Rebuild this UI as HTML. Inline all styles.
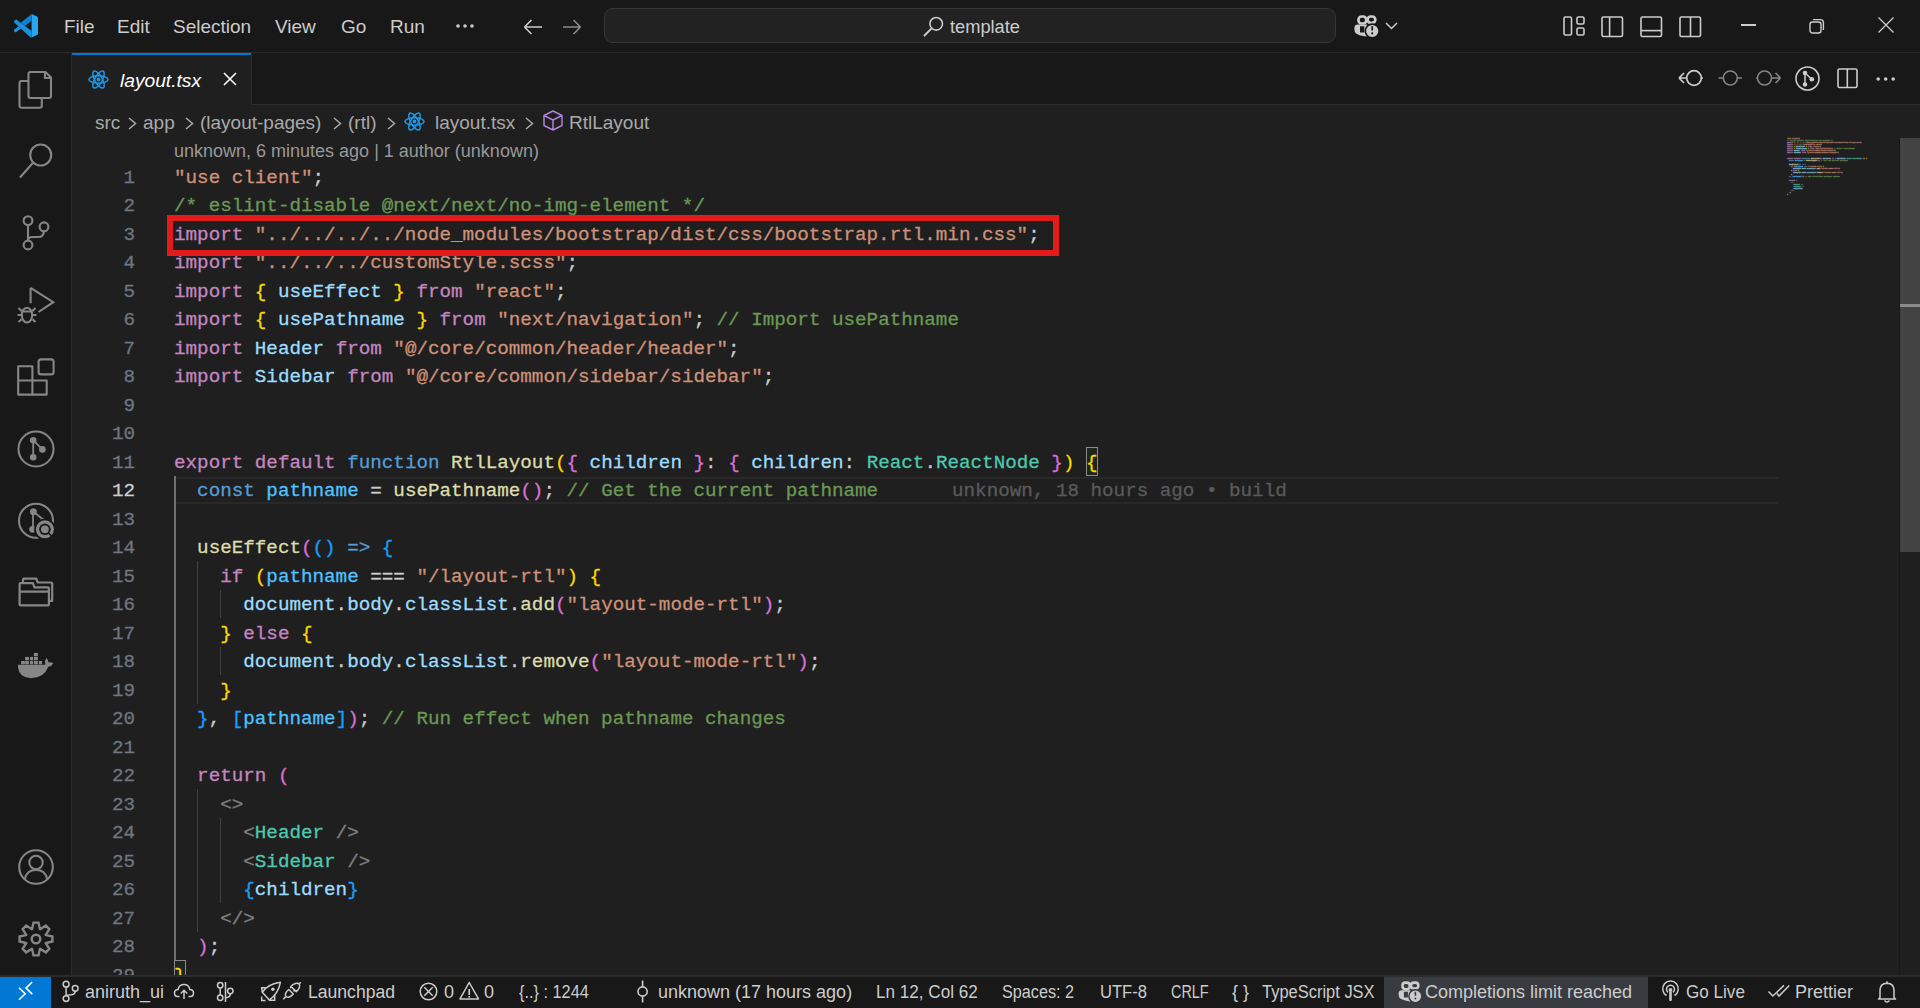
<!DOCTYPE html>
<html><head><meta charset="utf-8"><style>
*{margin:0;padding:0;box-sizing:border-box}
html,body{width:1920px;height:1008px;overflow:hidden;background:#1f1f1f;font-family:"Liberation Sans",sans-serif;color:#cccccc;position:relative}
.abs{position:absolute}
.tx{position:absolute;white-space:nowrap;line-height:24px}
svg{position:absolute;overflow:visible}
.ln{position:absolute;width:135px;text-align:right;color:#6e7681;font-family:"Liberation Mono",monospace;font-size:19.245px;line-height:28.5px;left:0;height:28.5px;padding-top:1.7px;-webkit-text-stroke:0.3px}
.cl{position:absolute;left:174px;white-space:pre;color:#cccccc;font-family:"Liberation Mono",monospace;font-size:19.245px;line-height:28.5px;height:28.5px;padding-top:1.7px;-webkit-text-stroke:0.3px}
.k{color:#c586c0}.s{color:#ce9178}.c{color:#6a9955}.v{color:#9cdcfe}.f{color:#dcdcaa}.b{color:#569cd6}.t{color:#4ec9b0}
.cn{color:#4fc1ff}.g{color:#808080}.p{color:#cccccc}
.y{color:#ffd700}.o{color:#da70d6}.u{color:#179fff}
.bm{outline:1px solid #888888;outline-offset:-1px;background:rgba(0,100,0,0.1)}
.bl{color:#5a5a5a}
</style></head><body>
<div class="abs" style="left:0;top:0;width:1920px;height:53px;background:#181818;border-bottom:1px solid #2b2b2b"></div>
<svg style="left:0px;top:0px" width="42" height="42" viewBox="0 0 42 42"><path d="M31.6 14 L37 16.5 Q38 17.1 38 18.2 V33.4 Q38 34.5 37 35 L31.6 37.6 Z" fill="#29a6f0"/><path d="M31.6 14 L31.6 20.8 L24.9 25.9 L20.8 22.7 Z" fill="#0d82d2"/><path d="M16.3 19.6 L31.6 31 L31.6 37.6 L30.3 37.3 L14.3 22.6 Q13.6 21.6 14.4 20.6 Z" fill="#1592e0"/><path d="M14.2 29.6 L20.3 25.2 L22.6 27.1 L16.3 31.9 Q15 32.5 14.2 31.6 Q13.6 30.5 14.2 29.6 Z" fill="#1592e0"/></svg>
<div class="tx" style="left:64px;top:14.5px;font-size:19px;color:#cccccc;">File</div>
<div class="tx" style="left:117px;top:14.5px;font-size:19px;color:#cccccc;">Edit</div>
<div class="tx" style="left:173px;top:14.5px;font-size:19px;color:#cccccc;">Selection</div>
<div class="tx" style="left:275px;top:14.5px;font-size:19px;color:#cccccc;">View</div>
<div class="tx" style="left:341px;top:14.5px;font-size:19px;color:#cccccc;">Go</div>
<div class="tx" style="left:390px;top:14.5px;font-size:19px;color:#cccccc;">Run</div>
<svg style="left:455px;top:23px" width="22" height="6" viewBox="0 0 22 6"><circle cx="3" cy="3" r="1.8" fill="#cccccc"/><circle cx="10" cy="3" r="1.8" fill="#cccccc"/><circle cx="17" cy="3" r="1.8" fill="#cccccc"/></svg>
<svg style="left:523px;top:17.5px" width="20" height="18" viewBox="0 0 20 18"><path d="M1.5 9 H19 M1.5 9 L8.5 2 M1.5 9 L8.5 16" stroke="#cccccc" stroke-width="1.6" fill="none"/></svg>
<svg style="left:562px;top:17.5px" width="20" height="18" viewBox="0 0 20 18"><path d="M1 9 H18.5 M18.5 9 L11.5 2 M18.5 9 L11.5 16" stroke="#8b8b8b" stroke-width="1.6" fill="none"/></svg>
<div class="abs" style="left:604px;top:8px;width:732px;height:35px;background:#222222;border:1px solid #363636;border-radius:9px"></div>
<svg style="left:923px;top:15px" width="22" height="22" viewBox="0 0 22 22"><circle cx="13.2" cy="8.8" r="6.3" stroke="#cccccc" stroke-width="1.6" fill="none"/><path d="M8.6 13.4 L1.5 20.5" stroke="#cccccc" stroke-width="1.9" stroke-linecap="round"/></svg>
<div class="tx" style="left:950px;top:14.5px;font-size:19px;color:#cccccc;transform:scaleX(0.96);transform-origin:0 0;">template</div>
<svg style="left:1350px;top:10px" width="35" height="32" viewBox="0 0 35 32"><rect x="8.5" y="6.5" width="7.7" height="7" rx="3" stroke="#cccccc" stroke-width="2.7" fill="none"/><rect x="17.6" y="6.5" width="7.7" height="6.3" rx="3" stroke="#cccccc" stroke-width="2.7" fill="none"/><path fill-rule="evenodd" d="M8 14.6 H17 V26.5 L14.6 26.3 Q9 25.5 6 23.5 Q4.4 22 4.4 19 V18 Q4.4 14.6 8 14.6 Z M10 16.2 H14.3 V22.4 H10 Z" fill="#cccccc"/><circle cx="22.2" cy="21" r="6.9" fill="#cccccc" stroke="#181818" stroke-width="1.6"/><path d="M22.2 16.2 V20.5" stroke="#181818" stroke-width="1.7"/><circle cx="22.2" cy="23.4" r="1.05" fill="#181818"/></svg>
<svg style="left:1385px;top:22px" width="13" height="8" viewBox="0 0 13 8"><path d="M1 1 L6.5 6.5 L12 1" stroke="#cccccc" stroke-width="1.5" fill="none"/></svg>
<svg style="left:1563px;top:16px" width="22" height="20" viewBox="0 0 22 20"><rect x="1" y="1" width="7.5" height="18" rx="1.5" stroke="#cccccc" stroke-width="1.6" fill="none"/><rect x="14" y="1" width="7" height="7" rx="1.5" stroke="#cccccc" stroke-width="1.6" fill="none"/><rect x="14" y="12" width="7" height="7" rx="1.5" stroke="#cccccc" stroke-width="1.6" fill="none"/></svg>
<svg style="left:1601px;top:16px" width="22" height="21" viewBox="0 0 22 21"><rect x="1" y="1" width="20.5" height="19.5" rx="1.5" stroke="#cccccc" stroke-width="1.6" fill="none"/><path d="M8.6 1 V20.5" stroke="#cccccc" stroke-width="1.6" fill="none"/></svg>
<svg style="left:1640px;top:16px" width="22" height="21" viewBox="0 0 22 21"><rect x="1" y="1" width="20.5" height="19.5" rx="1.5" stroke="#cccccc" stroke-width="1.6" fill="none"/><path d="M1 14.6 H21.5" stroke="#cccccc" stroke-width="1.6" fill="none"/></svg>
<svg style="left:1679px;top:16px" width="22" height="21" viewBox="0 0 22 21"><rect x="1" y="1" width="20.5" height="19.5" rx="1.5" stroke="#cccccc" stroke-width="1.6" fill="none"/><path d="M11.5 1 V20.5" stroke="#cccccc" stroke-width="1.6" fill="none"/></svg>
<div class="abs" style="left:1741px;top:24px;width:15px;height:2px;background:#cccccc"></div>
<svg style="left:1809px;top:18px" width="16" height="16" viewBox="0 0 16 16"><rect x="1" y="4" width="11" height="11" rx="2.5" stroke="#cccccc" stroke-width="1.4" fill="none"/><path d="M4 1.6 H11.5 Q14.4 1.6 14.4 4.5 V12" stroke="#cccccc" stroke-width="1.4" fill="none"/></svg>
<svg style="left:1878px;top:17px" width="16" height="16" viewBox="0 0 16 16"><path d="M0.5 0.5 L15.5 15.5 M15.5 0.5 L0.5 15.5" stroke="#cccccc" stroke-width="1.3"/></svg>
<div class="abs" style="left:0;top:53px;width:72px;height:923px;background:#181818;border-right:1px solid #2b2b2b"></div>
<svg style="left:18px;top:71px" width="36" height="38" viewBox="0 0 36 38"><path d="M10.5 10 H3.5 Q1.5 10 1.5 12 V34.8 Q1.5 36.8 3.5 36.8 H21.8 Q23.8 36.8 23.8 34.8 V27" stroke="#868686" stroke-width="2.1" fill="none"/><path d="M10.5 3 Q10.5 1 12.5 1 H27.5 L33 6.5 V25 Q33 27 31 27 H12.5 Q10.5 27 10.5 25 Z" stroke="#868686" stroke-width="2.1" fill="none"/><path d="M27 1.5 V7 H32.5" stroke="#868686" stroke-width="2.1" fill="none"/></svg>
<svg style="left:18px;top:142px" width="36" height="38" viewBox="0 0 36 38"><circle cx="22.7" cy="13" r="10.5" stroke="#868686" stroke-width="2.1" fill="none"/><path d="M15 20.8 L2 35.5" stroke="#868686" stroke-width="2.1"/></svg>
<svg style="left:18px;top:214px" width="36" height="38" viewBox="0 0 36 38"><circle cx="10" cy="6.6" r="4.4" stroke="#868686" stroke-width="2.1" fill="none"/><circle cx="10" cy="31" r="4.4" stroke="#868686" stroke-width="2.1" fill="none"/><circle cx="26" cy="12.8" r="4.4" stroke="#868686" stroke-width="2.1" fill="none"/><path d="M10 11 V26.6" stroke="#868686" stroke-width="2.1" fill="none"/><path d="M26 17.2 Q26 20 24 22 Q23 23 20.5 23 H14 Q10.5 23 10 26" stroke="#868686" stroke-width="2.1" fill="none"/></svg>
<svg style="left:16px;top:287px" width="40" height="40" viewBox="0 0 40 40"><path d="M14.6 0.8 V16.2 M14.6 0.8 L37.3 15.2 L22.6 25" stroke="#868686" stroke-width="2.1" fill="none" stroke-linejoin="miter"/><ellipse cx="11" cy="28.1" rx="5.2" ry="7.4" stroke="#868686" stroke-width="2.1" fill="none"/><path d="M5.8 24.5 H16.2 M2.5 21.1 L5.6 24 M19.5 21.1 L16.4 24 M1.5 28 H5.5 M16.5 28 H20.5 M2.5 35 L5.6 32.2 M19.5 35 L16.4 32.2" stroke="#868686" stroke-width="2.1" fill="none"/></svg>
<svg style="left:17px;top:358px" width="40" height="40" viewBox="0 0 40 40"><path d="M1.2 8.3 H15.4 V22.5 H29.7 V36.6 H1.2 Z" stroke="#868686" stroke-width="2.1" fill="none" stroke-linejoin="round"/><path d="M1.2 22.5 H15.4 V36.6" stroke="#868686" stroke-width="2.1" fill="none"/><rect x="21.6" y="1.4" width="15" height="15" rx="2.5" stroke="#868686" stroke-width="2.1" fill="none"/></svg>
<svg style="left:17px;top:430px" width="38" height="38" viewBox="0 0 38 38"><circle cx="19" cy="19" r="17.5" stroke="#868686" stroke-width="2.1" fill="none"/><circle cx="16.2" cy="10.2" r="3.3" fill="#868686"/><circle cx="16.2" cy="27.3" r="3.3" fill="#868686"/><circle cx="25.4" cy="19.4" r="3.3" fill="#868686"/><path d="M16.2 10.2 V27.3 M16.2 10.2 L25.4 19.4" stroke="#868686" stroke-width="1.8"/></svg>
<svg style="left:17px;top:502px" width="40" height="40" viewBox="0 0 40 40"><circle cx="19" cy="18.8" r="17" stroke="#868686" stroke-width="2.1" fill="none"/><circle cx="16.4" cy="9.7" r="3.4" fill="#868686"/><circle cx="15.6" cy="27.3" r="3.4" fill="#868686"/><path d="M16 9.7 V27.3 M16.4 9.7 L25.5 17 M23.5 17.5 L27 16.5" stroke="#868686" stroke-width="1.8"/><circle cx="27.9" cy="27.3" r="10.8" fill="#181818"/><circle cx="27.9" cy="27.3" r="9" fill="#868686"/><circle cx="27.9" cy="27.3" r="5.8" fill="#181818"/><circle cx="27.9" cy="27.3" r="3.9" fill="#868686"/><path d="M31.5 31 L34.5 34" stroke="#181818" stroke-width="1.6"/></svg>
<svg style="left:17px;top:576px" width="40" height="34" viewBox="0 0 40 34"><path d="M3.6 7.2 H15.95 L17.4 11.3 H30.9 Q31.9 11.3 31.9 12.3 V28.4 Q31.9 29.4 30.9 29.4 H3.6 Q2.6 29.4 2.6 28.4 V8.2 Q2.6 7.2 3.6 7.2 Z M2.6 15.6 H31.9" stroke="#868686" stroke-width="2.2" fill="none" stroke-linejoin="round"/><path d="M6 6.8 V3.7 Q6 2.7 7 2.7 H19.3 L20.7 6.5 H34.2 Q35.2 6.5 35.2 7.5 V24.9 H32.4" stroke="#868686" stroke-width="2.2" fill="none" stroke-linejoin="round"/></svg>
<svg style="left:17px;top:650px" width="40" height="32" viewBox="0 0 40 32"><path d="M1 14.8 H28.2 Q27 11.5 29.3 8.1 Q31.2 10 31.6 12.4 Q34.2 11.8 36.2 13.3 Q35 16.2 31.3 16.8 Q27 28.2 14 28.2 Q2.5 28 1 17.5 Z" fill="#868686"/><rect x="4.05" y="10.95" width="3.8" height="3.35" fill="#868686"/><rect x="8.1" y="10.95" width="3.8" height="3.35" fill="#868686"/><rect x="12.9" y="10.95" width="3.2" height="3.35" fill="#868686"/><rect x="16.9" y="10.95" width="4" height="3.35" fill="#868686"/><rect x="21.8" y="10.95" width="3.3" height="3.35" fill="#868686"/><rect x="8.1" y="6.9" width="3.8" height="3.35" fill="#868686"/><rect x="12.9" y="6.9" width="3.2" height="3.35" fill="#868686"/><rect x="16.9" y="6.9" width="4" height="3.35" fill="#868686"/><rect x="16.9" y="2.9" width="4" height="3.35" fill="#868686"/></svg>
<svg style="left:18px;top:849px" width="36" height="36" viewBox="0 0 36 36"><circle cx="18" cy="18" r="16.8" stroke="#868686" stroke-width="2.1" fill="none"/><circle cx="18" cy="13.5" r="6.7" stroke="#868686" stroke-width="2.1" fill="none"/><path d="M7 30 Q8.5 21 18 21 Q27.5 21 29 30" stroke="#868686" stroke-width="2.1" fill="none"/></svg>
<svg style="left:17.8px;top:920.8px" width="36" height="36" viewBox="0 0 36 36"><path d="M14.02 8.18 L15.52 1.59 L20.48 1.59 L21.98 8.18 L22.13 8.24 L27.85 4.64 L31.36 8.15 L27.76 13.87 L27.82 14.02 L34.41 15.52 L34.41 20.48 L27.82 21.98 L27.76 22.13 L31.36 27.85 L27.85 31.36 L22.13 27.76 L21.98 27.82 L20.48 34.41 L15.52 34.41 L14.02 27.82 L13.87 27.76 L8.15 31.36 L4.64 27.85 L8.24 22.13 L8.18 21.98 L1.59 20.48 L1.59 15.52 L8.18 14.02 L8.24 13.87 L4.64 8.15 L8.15 4.64 L13.87 8.24 Z" stroke="#868686" stroke-width="2.4" fill="none" stroke-linejoin="miter"/><circle cx="18" cy="18" r="4.3" stroke="#868686" stroke-width="2.4" fill="none"/></svg>
<div class="abs" style="left:72px;top:53px;width:1848px;height:52px;background:#181818;border-bottom:1px solid #2b2b2b"></div>
<div class="abs" style="left:72px;top:53px;width:180px;height:52px;background:#1f1f1f;border-right:1px solid #2b2b2b"></div>
<div class="abs" style="left:72px;top:53px;width:179px;height:2px;background:#0078d4"></div>
<svg style="left:88px;top:69px" width="21" height="21" viewBox="0 0 22 22"><g transform="translate(11 11)" stroke="#1d97e6" stroke-width="1.6" fill="none"><ellipse rx="10" ry="3.9"/><ellipse rx="10" ry="3.9" transform="rotate(60)"/><ellipse rx="10" ry="3.9" transform="rotate(120)"/></g><circle cx="11" cy="11" r="2" fill="#1d97e6"/></svg>
<div class="tx" style="left:120px;top:67.5px;font-size:19.2px;color:#ffffff;font-style:italic;line-height:26px">layout.tsx</div>
<svg style="left:223px;top:72px" width="14" height="14" viewBox="0 0 14 14"><path d="M1 1 L13 13 M13 1 L1 13" stroke="#ffffff" stroke-width="1.6"/></svg>
<svg style="left:1678px;top:68px" width="26" height="20" viewBox="0 0 26 20"><circle cx="16" cy="10" r="7.3" stroke="#cccccc" stroke-width="1.7" fill="none"/><path d="M1 10 H8.7 M1 10 L6 5 M1 10 L6 15 M23.3 10 H25" stroke="#cccccc" stroke-width="1.7" fill="none"/></svg>
<svg style="left:1718px;top:68px" width="26" height="20" viewBox="0 0 26 20"><circle cx="12.3" cy="10" r="7" stroke="#858585" stroke-width="1.6" fill="none"/><path d="M0.5 10 H5.3 M19.3 10 H24" stroke="#858585" stroke-width="1.6" fill="none"/></svg>
<svg style="left:1756px;top:68px" width="26" height="20" viewBox="0 0 26 20"><circle cx="8.5" cy="10" r="7" stroke="#858585" stroke-width="1.6" fill="none"/><path d="M0 10 H1.5 M15.5 10 H24.5 M24.5 10 L19.5 5 M24.5 10 L19.5 15" stroke="#858585" stroke-width="1.6" fill="none"/></svg>
<svg style="left:1795px;top:66px" width="26" height="26" viewBox="0 0 26 26"><circle cx="12.5" cy="12.5" r="11.5" stroke="#cccccc" stroke-width="1.6" fill="none"/><circle cx="10" cy="7" r="2.3" fill="#cccccc"/><circle cx="10" cy="18.5" r="2.3" fill="#cccccc"/><circle cx="16.8" cy="13.2" r="2.3" fill="#cccccc"/><path d="M10 7 V18.5 M10 7 L16.8 13.2" stroke="#cccccc" stroke-width="1.5"/></svg>
<svg style="left:1837px;top:68px" width="21" height="21" viewBox="0 0 21 21"><rect x="1" y="1" width="19" height="18.5" rx="1.5" stroke="#cccccc" stroke-width="1.6" fill="none"/><path d="M10.3 1 V19.5" stroke="#cccccc" stroke-width="1.6"/></svg>
<svg style="left:1876px;top:76px" width="20" height="6" viewBox="0 0 20 6"><circle cx="2.2" cy="3" r="1.8" fill="#cccccc"/><circle cx="9.7" cy="3" r="1.8" fill="#cccccc"/><circle cx="17.2" cy="3" r="1.8" fill="#cccccc"/></svg>
<div class="tx" style="left:95px;top:110.5px;font-size:19px;color:#a9a9a9;">src</div>
<svg style="left:128px;top:117px" width="9" height="13" viewBox="0 0 9 13"><path d="M1 1 L7.5 6.5 L1 12" stroke="#a9a9a9" stroke-width="1.5" fill="none"/></svg>
<div class="tx" style="left:143px;top:110.5px;font-size:19px;color:#a9a9a9;">app</div>
<svg style="left:185px;top:117px" width="9" height="13" viewBox="0 0 9 13"><path d="M1 1 L7.5 6.5 L1 12" stroke="#a9a9a9" stroke-width="1.5" fill="none"/></svg>
<div class="tx" style="left:200px;top:110.5px;font-size:19px;color:#a9a9a9;">(layout-pages)</div>
<svg style="left:333px;top:117px" width="9" height="13" viewBox="0 0 9 13"><path d="M1 1 L7.5 6.5 L1 12" stroke="#a9a9a9" stroke-width="1.5" fill="none"/></svg>
<div class="tx" style="left:348px;top:110.5px;font-size:19px;color:#a9a9a9;">(rtl)</div>
<svg style="left:387px;top:117px" width="9" height="13" viewBox="0 0 9 13"><path d="M1 1 L7.5 6.5 L1 12" stroke="#a9a9a9" stroke-width="1.5" fill="none"/></svg>
<svg style="left:404px;top:111px" width="21" height="21" viewBox="0 0 22 22"><g transform="translate(11 11)" stroke="#1d97e6" stroke-width="1.6" fill="none"><ellipse rx="10" ry="3.9"/><ellipse rx="10" ry="3.9" transform="rotate(60)"/><ellipse rx="10" ry="3.9" transform="rotate(120)"/></g><circle cx="11" cy="11" r="2" fill="#1d97e6"/></svg>
<div class="tx" style="left:435px;top:110.5px;font-size:19px;color:#a9a9a9;">layout.tsx</div>
<svg style="left:525px;top:117px" width="9" height="13" viewBox="0 0 9 13"><path d="M1 1 L7.5 6.5 L1 12" stroke="#a9a9a9" stroke-width="1.5" fill="none"/></svg>
<svg style="left:543px;top:110px" width="20" height="21" viewBox="0 0 20 21"><path d="M10 1 L19 5.5 V15.5 L10 20 L1 15.5 V5.5 Z M1 5.5 L10 10 L19 5.5 M10 10 V20" stroke="#b180d7" stroke-width="1.5" fill="none" stroke-linejoin="round"/></svg>
<div class="tx" style="left:569px;top:110.5px;font-size:19px;color:#a9a9a9;">RtlLayout</div>
<div class="tx" style="left:174px;top:139px;font-size:18px;color:#999999;">unknown, 6 minutes ago | 1 author (unknown)</div>
<div class="abs" style="left:174px;top:476.5px;width:1604px;height:27.5px;border:2px solid #282828;border-left:none;border-right:none"></div>
<div class="abs" style="left:174.0px;top:475.5px;width:2px;height:484.5px;background:#707070"></div>
<div class="abs" style="left:197.1px;top:561.0px;width:1px;height:142.5px;background:#404040"></div>
<div class="abs" style="left:220.2px;top:589.5px;width:1px;height:28.5px;background:#404040"></div>
<div class="abs" style="left:220.2px;top:646.5px;width:1px;height:28.5px;background:#404040"></div>
<div class="abs" style="left:197.1px;top:789.0px;width:1px;height:142.5px;background:#404040"></div>
<div class="abs" style="left:220.2px;top:817.5px;width:1px;height:85.5px;background:#404040"></div>
<div class="abs" style="left:1086.2px;top:447.0px;width:12px;height:29px;border:1.2px solid #8a8a8a;background:#1e271e"></div>
<div class="abs" style="left:174.0px;top:960.0px;width:12px;height:29px;border:1.2px solid #8a8a8a;background:#1e271e"></div>
<div class="ln" style="top:162.0px;color:#6e7681">1</div>
<div class="cl" style="top:162.0px"><span class="s">&quot;use client&quot;</span><span class="p">;</span></div>
<div class="ln" style="top:190.5px;color:#6e7681">2</div>
<div class="cl" style="top:190.5px"><span class="c">/* eslint-disable @next/next/no-img-element */</span></div>
<div class="ln" style="top:219.0px;color:#6e7681">3</div>
<div class="cl" style="top:219.0px"><span class="k">import</span><span class="p"> </span><span class="s">&quot;../../../../node_modules/bootstrap/dist/css/bootstrap.rtl.min.css&quot;</span><span class="p">;</span></div>
<div class="ln" style="top:247.5px;color:#6e7681">4</div>
<div class="cl" style="top:247.5px"><span class="k">import</span><span class="p"> </span><span class="s">&quot;../../../customStyle.scss&quot;</span><span class="p">;</span></div>
<div class="ln" style="top:276.0px;color:#6e7681">5</div>
<div class="cl" style="top:276.0px"><span class="k">import</span><span class="p"> </span><span class="y">{</span><span class="p"> </span><span class="v">useEffect</span><span class="p"> </span><span class="y">}</span><span class="p"> </span><span class="k">from</span><span class="p"> </span><span class="s">&quot;react&quot;</span><span class="p">;</span></div>
<div class="ln" style="top:304.5px;color:#6e7681">6</div>
<div class="cl" style="top:304.5px"><span class="k">import</span><span class="p"> </span><span class="y">{</span><span class="p"> </span><span class="v">usePathname</span><span class="p"> </span><span class="y">}</span><span class="p"> </span><span class="k">from</span><span class="p"> </span><span class="s">&quot;next/navigation&quot;</span><span class="p">; </span><span class="c">// Import usePathname</span></div>
<div class="ln" style="top:333.0px;color:#6e7681">7</div>
<div class="cl" style="top:333.0px"><span class="k">import</span><span class="p"> </span><span class="v">Header</span><span class="p"> </span><span class="k">from</span><span class="p"> </span><span class="s">&quot;@/core/common/header/header&quot;</span><span class="p">;</span></div>
<div class="ln" style="top:361.5px;color:#6e7681">8</div>
<div class="cl" style="top:361.5px"><span class="k">import</span><span class="p"> </span><span class="v">Sidebar</span><span class="p"> </span><span class="k">from</span><span class="p"> </span><span class="s">&quot;@/core/common/sidebar/sidebar&quot;</span><span class="p">;</span></div>
<div class="ln" style="top:390.0px;color:#6e7681">9</div>
<div class="ln" style="top:418.5px;color:#6e7681">10</div>
<div class="ln" style="top:447.0px;color:#6e7681">11</div>
<div class="cl" style="top:447.0px"><span class="k">export</span><span class="p"> </span><span class="k">default</span><span class="p"> </span><span class="b">function</span><span class="p"> </span><span class="f">RtlLayout</span><span class="y">(</span><span class="o">{</span><span class="p"> </span><span class="v">children</span><span class="p"> </span><span class="o">}</span><span class="p">: </span><span class="o">{</span><span class="p"> </span><span class="v">children</span><span class="p">: </span><span class="t">React</span><span class="p">.</span><span class="t">ReactNode</span><span class="p"> </span><span class="o">}</span><span class="y">)</span><span class="p"> </span><span class="y">{</span></div>
<div class="ln" style="top:475.5px;color:#cccccc">12</div>
<div class="cl" style="top:475.5px"><span class="p">  </span><span class="b">const</span><span class="p"> </span><span class="cn">pathname</span><span class="p"> = </span><span class="f">usePathname</span><span class="o">()</span><span class="p">; </span><span class="c">// Get the current pathname</span></div>
<div class="ln" style="top:504.0px;color:#6e7681">13</div>
<div class="ln" style="top:532.5px;color:#6e7681">14</div>
<div class="cl" style="top:532.5px"><span class="p">  </span><span class="f">useEffect</span><span class="o">(</span><span class="u">()</span><span class="p"> </span><span class="b">=&gt;</span><span class="p"> </span><span class="u">{</span></div>
<div class="ln" style="top:561.0px;color:#6e7681">15</div>
<div class="cl" style="top:561.0px"><span class="p">    </span><span class="k">if</span><span class="p"> </span><span class="y">(</span><span class="cn">pathname</span><span class="p"> === </span><span class="s">&quot;/layout-rtl&quot;</span><span class="y">)</span><span class="p"> </span><span class="y">{</span></div>
<div class="ln" style="top:589.5px;color:#6e7681">16</div>
<div class="cl" style="top:589.5px"><span class="p">      </span><span class="v">document</span><span class="p">.</span><span class="v">body</span><span class="p">.</span><span class="v">classList</span><span class="p">.</span><span class="f">add</span><span class="o">(</span><span class="s">&quot;layout-mode-rtl&quot;</span><span class="o">)</span><span class="p">;</span></div>
<div class="ln" style="top:618.0px;color:#6e7681">17</div>
<div class="cl" style="top:618.0px"><span class="p">    </span><span class="y">}</span><span class="p"> </span><span class="k">else</span><span class="p"> </span><span class="y">{</span></div>
<div class="ln" style="top:646.5px;color:#6e7681">18</div>
<div class="cl" style="top:646.5px"><span class="p">      </span><span class="v">document</span><span class="p">.</span><span class="v">body</span><span class="p">.</span><span class="v">classList</span><span class="p">.</span><span class="f">remove</span><span class="o">(</span><span class="s">&quot;layout-mode-rtl&quot;</span><span class="o">)</span><span class="p">;</span></div>
<div class="ln" style="top:675.0px;color:#6e7681">19</div>
<div class="cl" style="top:675.0px"><span class="p">    </span><span class="y">}</span></div>
<div class="ln" style="top:703.5px;color:#6e7681">20</div>
<div class="cl" style="top:703.5px"><span class="p">  </span><span class="u">}</span><span class="p">, </span><span class="u">[</span><span class="cn">pathname</span><span class="u">]</span><span class="o">)</span><span class="p">; </span><span class="c">// Run effect when pathname changes</span></div>
<div class="ln" style="top:732.0px;color:#6e7681">21</div>
<div class="ln" style="top:760.5px;color:#6e7681">22</div>
<div class="cl" style="top:760.5px"><span class="p">  </span><span class="k">return</span><span class="p"> </span><span class="o">(</span></div>
<div class="ln" style="top:789.0px;color:#6e7681">23</div>
<div class="cl" style="top:789.0px"><span class="p">    </span><span class="g">&lt;&gt;</span></div>
<div class="ln" style="top:817.5px;color:#6e7681">24</div>
<div class="cl" style="top:817.5px"><span class="p">      </span><span class="g">&lt;</span><span class="t">Header</span><span class="p"> </span><span class="g">/&gt;</span></div>
<div class="ln" style="top:846.0px;color:#6e7681">25</div>
<div class="cl" style="top:846.0px"><span class="p">      </span><span class="g">&lt;</span><span class="t">Sidebar</span><span class="p"> </span><span class="g">/&gt;</span></div>
<div class="ln" style="top:874.5px;color:#6e7681">26</div>
<div class="cl" style="top:874.5px"><span class="p">      </span><span class="u">{</span><span class="v">children</span><span class="u">}</span></div>
<div class="ln" style="top:903.0px;color:#6e7681">27</div>
<div class="cl" style="top:903.0px"><span class="p">    </span><span class="g">&lt;/&gt;</span></div>
<div class="ln" style="top:931.5px;color:#6e7681">28</div>
<div class="cl" style="top:931.5px"><span class="p">  </span><span class="o">)</span><span class="p">;</span></div>
<div class="ln" style="top:960.0px;color:#6e7681">29</div>
<div class="cl" style="top:960.0px"><span class="y">}</span></div>
<div class="cl bl" style="top:475.5px;left:952px">unknown, 18 hours ago • build</div>
<div class="abs" style="left:167px;top:215px;width:892px;height:41px;border:6px solid #e31b1b"></div>
<div class="abs" style="left:1787px;top:137.8px;width:100px;height:60px;font-family:'Liberation Mono',monospace;font-size:1.6667px;-webkit-text-stroke:0.35px;opacity:0.75"><div style="position:absolute;left:0;top:0px;white-space:pre;height:2px;line-height:2px"><span class="s">&quot;use client&quot;</span><span class="p">;</span></div><div style="position:absolute;left:0;top:2px;white-space:pre;height:2px;line-height:2px"><span class="c">/* eslint-disable @next/next/no-img-element */</span></div><div style="position:absolute;left:0;top:4px;white-space:pre;height:2px;line-height:2px"><span class="k">import</span><span class="p"> </span><span class="s">&quot;../../../../node_modules/bootstrap/dist/css/bootstrap.rtl.min.css&quot;</span><span class="p">;</span></div><div style="position:absolute;left:0;top:6px;white-space:pre;height:2px;line-height:2px"><span class="k">import</span><span class="p"> </span><span class="s">&quot;../../../customStyle.scss&quot;</span><span class="p">;</span></div><div style="position:absolute;left:0;top:8px;white-space:pre;height:2px;line-height:2px"><span class="k">import</span><span class="p"> </span><span class="y">{</span><span class="p"> </span><span class="v">useEffect</span><span class="p"> </span><span class="y">}</span><span class="p"> </span><span class="k">from</span><span class="p"> </span><span class="s">&quot;react&quot;</span><span class="p">;</span></div><div style="position:absolute;left:0;top:10px;white-space:pre;height:2px;line-height:2px"><span class="k">import</span><span class="p"> </span><span class="y">{</span><span class="p"> </span><span class="v">usePathname</span><span class="p"> </span><span class="y">}</span><span class="p"> </span><span class="k">from</span><span class="p"> </span><span class="s">&quot;next/navigation&quot;</span><span class="p">; </span><span class="c">// Import usePathname</span></div><div style="position:absolute;left:0;top:12px;white-space:pre;height:2px;line-height:2px"><span class="k">import</span><span class="p"> </span><span class="v">Header</span><span class="p"> </span><span class="k">from</span><span class="p"> </span><span class="s">&quot;@/core/common/header/header&quot;</span><span class="p">;</span></div><div style="position:absolute;left:0;top:14px;white-space:pre;height:2px;line-height:2px"><span class="k">import</span><span class="p"> </span><span class="v">Sidebar</span><span class="p"> </span><span class="k">from</span><span class="p"> </span><span class="s">&quot;@/core/common/sidebar/sidebar&quot;</span><span class="p">;</span></div><div style="position:absolute;left:0;top:16px;white-space:pre;height:2px;line-height:2px"></div><div style="position:absolute;left:0;top:18px;white-space:pre;height:2px;line-height:2px"></div><div style="position:absolute;left:0;top:20px;white-space:pre;height:2px;line-height:2px"><span class="k">export</span><span class="p"> </span><span class="k">default</span><span class="p"> </span><span class="b">function</span><span class="p"> </span><span class="f">RtlLayout</span><span class="y">(</span><span class="o">{</span><span class="p"> </span><span class="v">children</span><span class="p"> </span><span class="o">}</span><span class="p">: </span><span class="o">{</span><span class="p"> </span><span class="v">children</span><span class="p">: </span><span class="t">React</span><span class="p">.</span><span class="t">ReactNode</span><span class="p"> </span><span class="o">}</span><span class="y">)</span><span class="p"> </span><span class="y">{</span></div><div style="position:absolute;left:0;top:22px;white-space:pre;height:2px;line-height:2px"><span class="p">  </span><span class="b">const</span><span class="p"> </span><span class="cn">pathname</span><span class="p"> = </span><span class="f">usePathname</span><span class="o">()</span><span class="p">; </span><span class="c">// Get the current pathname</span></div><div style="position:absolute;left:0;top:24px;white-space:pre;height:2px;line-height:2px"></div><div style="position:absolute;left:0;top:26px;white-space:pre;height:2px;line-height:2px"><span class="p">  </span><span class="f">useEffect</span><span class="o">(</span><span class="u">()</span><span class="p"> </span><span class="b">=&gt;</span><span class="p"> </span><span class="u">{</span></div><div style="position:absolute;left:0;top:28px;white-space:pre;height:2px;line-height:2px"><span class="p">    </span><span class="k">if</span><span class="p"> </span><span class="y">(</span><span class="cn">pathname</span><span class="p"> === </span><span class="s">&quot;/layout-rtl&quot;</span><span class="y">)</span><span class="p"> </span><span class="y">{</span></div><div style="position:absolute;left:0;top:30px;white-space:pre;height:2px;line-height:2px"><span class="p">      </span><span class="v">document</span><span class="p">.</span><span class="v">body</span><span class="p">.</span><span class="v">classList</span><span class="p">.</span><span class="f">add</span><span class="o">(</span><span class="s">&quot;layout-mode-rtl&quot;</span><span class="o">)</span><span class="p">;</span></div><div style="position:absolute;left:0;top:32px;white-space:pre;height:2px;line-height:2px"><span class="p">    </span><span class="y">}</span><span class="p"> </span><span class="k">else</span><span class="p"> </span><span class="y">{</span></div><div style="position:absolute;left:0;top:34px;white-space:pre;height:2px;line-height:2px"><span class="p">      </span><span class="v">document</span><span class="p">.</span><span class="v">body</span><span class="p">.</span><span class="v">classList</span><span class="p">.</span><span class="f">remove</span><span class="o">(</span><span class="s">&quot;layout-mode-rtl&quot;</span><span class="o">)</span><span class="p">;</span></div><div style="position:absolute;left:0;top:36px;white-space:pre;height:2px;line-height:2px"><span class="p">    </span><span class="y">}</span></div><div style="position:absolute;left:0;top:38px;white-space:pre;height:2px;line-height:2px"><span class="p">  </span><span class="u">}</span><span class="p">, </span><span class="u">[</span><span class="cn">pathname</span><span class="u">]</span><span class="o">)</span><span class="p">; </span><span class="c">// Run effect when pathname changes</span></div><div style="position:absolute;left:0;top:40px;white-space:pre;height:2px;line-height:2px"></div><div style="position:absolute;left:0;top:42px;white-space:pre;height:2px;line-height:2px"><span class="p">  </span><span class="k">return</span><span class="p"> </span><span class="o">(</span></div><div style="position:absolute;left:0;top:44px;white-space:pre;height:2px;line-height:2px"><span class="p">    </span><span class="g">&lt;&gt;</span></div><div style="position:absolute;left:0;top:46px;white-space:pre;height:2px;line-height:2px"><span class="p">      </span><span class="g">&lt;</span><span class="t">Header</span><span class="p"> </span><span class="g">/&gt;</span></div><div style="position:absolute;left:0;top:48px;white-space:pre;height:2px;line-height:2px"><span class="p">      </span><span class="g">&lt;</span><span class="t">Sidebar</span><span class="p"> </span><span class="g">/&gt;</span></div><div style="position:absolute;left:0;top:50px;white-space:pre;height:2px;line-height:2px"><span class="p">      </span><span class="u">{</span><span class="v">children</span><span class="u">}</span></div><div style="position:absolute;left:0;top:52px;white-space:pre;height:2px;line-height:2px"><span class="p">    </span><span class="g">&lt;/&gt;</span></div><div style="position:absolute;left:0;top:54px;white-space:pre;height:2px;line-height:2px"><span class="p">  </span><span class="o">)</span><span class="p">;</span></div><div style="position:absolute;left:0;top:56px;white-space:pre;height:2px;line-height:2px"><span class="y">}</span></div></div>
<div class="abs" style="left:1899px;top:138px;width:1px;height:838px;background:#171717"></div>
<div class="abs" style="left:1900px;top:138px;width:20px;height:414px;background:#434343"></div>
<div class="abs" style="left:1900px;top:304px;width:20px;height:3px;background:#8a8a8a"></div>
<div class="abs" style="left:0;top:975px;width:1920px;height:33px;background:#181818;border-top:2px solid #2b2b2b"></div>
<div class="abs" style="left:0;top:977px;width:51px;height:31px;background:#0078d4"></div>
<div class="abs" style="left:1384px;top:977px;width:264px;height:31px;background:#383b40"></div>
<svg style="left:10px;top:976px" width="32" height="32" viewBox="0 0 32 32"><path d="M9.5 12.2 L15.2 17.75 L9.5 23.3 M21.7 6.5 L16 12.1 L21.8 17.7" stroke="#ffffff" stroke-width="1.6" fill="none" stroke-linecap="round"/></svg>
<svg style="left:60px;top:978px" width="22" height="26" viewBox="0 0 22 26"><circle cx="6.1" cy="6.2" r="2.9" stroke="#cccccc" stroke-width="1.5" fill="none"/><circle cx="6.1" cy="20.6" r="2.9" stroke="#cccccc" stroke-width="1.5" fill="none"/><circle cx="15.2" cy="10.3" r="2.9" stroke="#cccccc" stroke-width="1.5" fill="none"/><path d="M6.1 9.1 V17.7" stroke="#cccccc" stroke-width="1.5" fill="none"/><path d="M15.2 13.2 Q15.2 16.5 11 16.8 Q6.5 17 6.1 17.7" stroke="#cccccc" stroke-width="1.5" fill="none"/></svg>
<svg style="left:173px;top:982px" width="22" height="20" viewBox="0 0 22 20"><path d="M6.5 14.5 H4.5 Q1.5 14.5 1.5 11 Q1.5 7.7 5 7.5 Q6 2.5 11 2.5 Q16 2.5 16.8 7.5 Q20.5 7.7 20.5 11 Q20.5 14.5 17.5 14.5 H15.5" stroke="#cccccc" stroke-width="1.5" fill="none"/><path d="M11 17 V8.5 M7.8 11.5 L11 8.3 L14.2 11.5" stroke="#cccccc" stroke-width="1.5" fill="none"/></svg>
<svg style="left:214px;top:978px" width="22" height="26" viewBox="0 0 22 26"><circle cx="6.2" cy="7.2" r="2.7" stroke="#cccccc" stroke-width="1.5" fill="none"/><circle cx="6.2" cy="19.7" r="2.7" stroke="#cccccc" stroke-width="1.5" fill="none"/><circle cx="16.3" cy="13" r="2.7" stroke="#cccccc" stroke-width="1.5" fill="none"/><path d="M6.2 9.9 V17" stroke="#cccccc" stroke-width="1.5" fill="none"/><path d="M11.5 4 V24" stroke="#cccccc" stroke-width="1.5" fill="none"/><path d="M16.3 15.7 Q16.3 19.5 11.5 19.7" stroke="#cccccc" stroke-width="1.5" fill="none"/></svg>
<svg style="left:255px;top:976px" width="50" height="32" viewBox="0 0 50 32"><path d="M7.3 16.2 Q13 8 25.4 6.3 Q23.5 17 14.3 24.1 Z" stroke="#cccccc" stroke-width="1.5" fill="none" stroke-linejoin="round"/><circle cx="17.9" cy="13.3" r="1.7" fill="#cccccc"/><path d="M7.3 16.2 L6.7 11.7 H10.8 M6.7 20.6 V24.4 H10.5 M14.3 24.3 H19.7 V19" stroke="#cccccc" stroke-width="1.5" fill="none"/><path d="M35.9 10.5 C38.5 7.5 42.5 6.5 44 8 C45.5 9.5 44.3 13 41.3 15.6 Z M33.8 13.5 C30.5 16 29.5 19 31 20.5 C32.5 22 35.5 21.3 38.3 18 Z" stroke="#cccccc" stroke-width="1.5" fill="none" stroke-linejoin="round"/><path d="M44 8 L45.8 6.2 M35.2 12.1 L36.6 10.7 M38.5 15.4 L39.9 14 M30.6 20.9 L28.2 23.3" stroke="#cccccc" stroke-width="1.5" fill="none"/></svg>
<svg style="left:415px;top:976px" width="85" height="32" viewBox="0 0 85 32"><circle cx="13.5" cy="15.5" r="8.3" stroke="#cccccc" stroke-width="1.5" fill="none"/><path d="M9.3 11.3 L17.7 19.7 M17.7 11.3 L9.3 19.7" stroke="#cccccc" stroke-width="1.5"/><path d="M54.2 6.5 L63.5 22.9 H45 Z" stroke="#cccccc" stroke-width="1.5" fill="none" stroke-linejoin="round"/><path d="M54.2 13 V19" stroke="#cccccc" stroke-width="1.7"/><rect x="53.3" y="20" width="1.8" height="1.6" fill="#cccccc"/></svg>
<svg style="left:634px;top:978px" width="16" height="26" viewBox="0 0 16 26"><circle cx="8.6" cy="13.5" r="4.6" stroke="#cccccc" stroke-width="1.6" fill="none"/><path d="M8.6 2.5 V8.9 M8.6 18.1 V24.5" stroke="#cccccc" stroke-width="1.6"/></svg>
<div class="abs" style="left:0;top:0;transform:translate(1394.5px,976.5px) scale(0.94);transform-origin:0 0"><svg style="left:0px;top:0px" width="35" height="32" viewBox="0 0 35 32"><rect x="8.5" y="6.5" width="7.7" height="7" rx="3" stroke="#cccccc" stroke-width="2.7" fill="none"/><rect x="17.6" y="6.5" width="7.7" height="6.3" rx="3" stroke="#cccccc" stroke-width="2.7" fill="none"/><path fill-rule="evenodd" d="M8 14.6 H17 V26.5 L14.6 26.3 Q9 25.5 6 23.5 Q4.4 22 4.4 19 V18 Q4.4 14.6 8 14.6 Z M10 16.2 H14.3 V22.4 H10 Z" fill="#cccccc"/><circle cx="22.2" cy="21" r="6.9" fill="#cccccc" stroke="#383b40" stroke-width="1.6"/><path d="M22.2 16.2 V20.5" stroke="#383b40" stroke-width="1.7"/><circle cx="22.2" cy="23.4" r="1.05" fill="#383b40"/></svg></div>
<svg style="left:1660px;top:978px" width="22" height="26" viewBox="0 0 22 26"><path d="M6.5 17.5 A7.8 7.8 0 1 1 14.5 17.5" stroke="#cccccc" stroke-width="1.5" fill="none"/><path d="M8 14.3 A4 4 0 1 1 13 14.3" stroke="#cccccc" stroke-width="1.5" fill="none"/><circle cx="10.5" cy="12" r="1.9" fill="#cccccc"/><rect x="9.2" y="13.5" width="2.6" height="9.5" rx="1" fill="#cccccc"/></svg>
<svg style="left:1766px;top:982px" width="26" height="16" viewBox="0 0 26 16"><path d="M2.5 9.5 L6.8 14 L18 3.4 M11 11.5 L13 14 L23.3 3.4" stroke="#cccccc" stroke-width="1.5" fill="none"/></svg>
<svg style="left:1877px;top:980px" width="20" height="24" viewBox="0 0 20 24"><path d="M3 17.5 V10.5 Q3 3.5 10 3.3 Q17 3.5 17 10.5 V17.5 L18.5 19 H1.5 Z" stroke="#cccccc" stroke-width="1.5" fill="none" stroke-linejoin="round"/><path d="M7.5 20.5 Q10 23.5 12.5 20.5" stroke="#cccccc" stroke-width="1.5" fill="none"/><path d="M10 1.3 V3.3" stroke="#cccccc" stroke-width="1.5"/></svg>
<div class="tx" style="left:85px;top:980px;font-size:18px;color:#cccccc;">aniruth_ui</div>
<div class="tx" style="left:308px;top:980px;font-size:18px;color:#cccccc;transform:scaleX(0.977);transform-origin:0 0;">Launchpad</div>
<div class="tx" style="left:444px;top:980px;font-size:18px;color:#cccccc;">0</div>
<div class="tx" style="left:484px;top:980px;font-size:18px;color:#cccccc;">0</div>
<div class="tx" style="left:519px;top:980px;font-size:18px;color:#cccccc;transform:scaleX(0.905);transform-origin:0 0;">{..} : 1244</div>
<div class="tx" style="left:658px;top:980px;font-size:18px;color:#cccccc;">unknown (17 hours ago)</div>
<div class="tx" style="left:876px;top:980px;font-size:18px;color:#cccccc;transform:scaleX(0.95);transform-origin:0 0;">Ln 12, Col 62</div>
<div class="tx" style="left:1002px;top:980px;font-size:18px;color:#cccccc;transform:scaleX(0.9);transform-origin:0 0;">Spaces: 2</div>
<div class="tx" style="left:1100px;top:980px;font-size:18px;color:#cccccc;transform:scaleX(0.92);transform-origin:0 0;">UTF-8</div>
<div class="tx" style="left:1171px;top:980px;font-size:18px;color:#cccccc;transform:scaleX(0.8);transform-origin:0 0;">CRLF</div>
<div class="tx" style="left:1232px;top:980px;font-size:18px;color:#cccccc;">{ }</div>
<div class="tx" style="left:1262px;top:980px;font-size:18px;color:#cccccc;transform:scaleX(0.915);transform-origin:0 0;">TypeScript JSX</div>
<div class="tx" style="left:1425px;top:980px;font-size:18px;color:#cccccc;">Completions limit reached</div>
<div class="tx" style="left:1686px;top:980px;font-size:18px;color:#cccccc;transform:scaleX(0.95);transform-origin:0 0;">Go Live</div>
<div class="tx" style="left:1795px;top:980px;font-size:18px;color:#cccccc;">Prettier</div>
</body></html>
